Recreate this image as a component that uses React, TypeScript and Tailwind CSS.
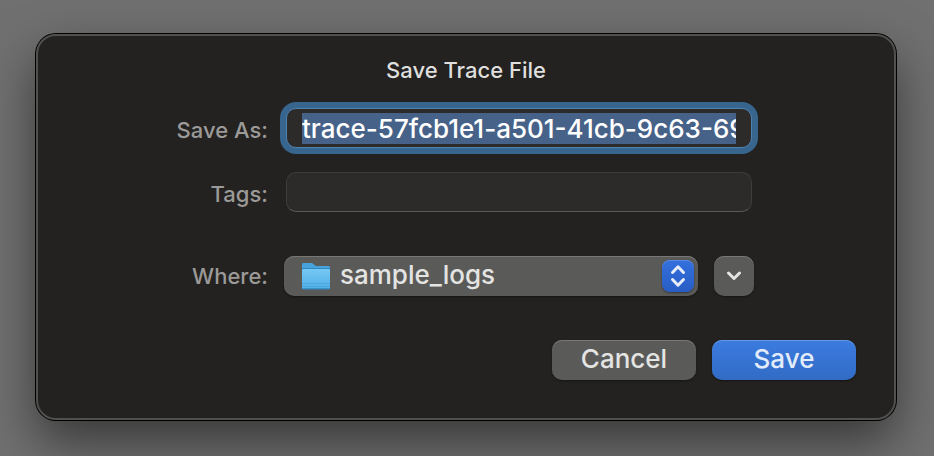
import { useEffect, useRef } from 'react';
import type { ReactNode } from 'react';
import { clsx } from 'clsx';

const FILE_NAME = 'trace-57fcb1e1-a501-41cb-9c63-69';
const FOLDERS = ['sample_logs'];

interface FieldRowProps {
  id: string;
  label: string;
  className?: string;
  labelClassName?: string;
  children: ReactNode;
}

/** Right-aligned label with its control next to it. */
function FieldRow({ id, label, className, labelClassName, children }: FieldRowProps) {
  return (
    <div className={clsx('grid grid-cols-[230px_minmax(0,1fr)] items-center gap-x-4', className)}>
      <label htmlFor={id} className={clsx('text-right text-[22px] leading-6 font-medium text-[#9b9a98]', labelClassName)}>
        {label}
      </label>
      {children}
    </div>
  );
}

function FolderIcon() {
  return (
    <svg width="30" height="28" viewBox="0 0 30 28" aria-hidden="true">
      <defs>
        <linearGradient id="folder-front" x1="0" y1="0" x2="0" y2="1">
          <stop offset="0" stopColor="#74c8f4" />
          <stop offset="1" stopColor="#52aee6" />
        </linearGradient>
      </defs>
      <path d="M1 2.500A1.500 1.500 0 0 1 2.500 1h7.700c.8 0 1.300.2 1.900.7l1.500 1.500c.5.5 1 .8 1.700.8h12.200A1.500 1.500 0 0 1 29 5.500V26a1.500 1.500 0 0 1-1.500 1.500h-25A1.500 1.500 0 0 1 1 26z" fill="#2f86c0" />
      <path d="M1 2.500A1.500 1.500 0 0 1 2.500 1h7.700c.8 0 1.300.2 1.900.7l1.500 1.500c.5.5 1 .8 1.700.8h12.200A1.500 1.500 0 0 1 29 5.500V6H1z" fill="#48a3dc" />
      <path d="M1 8A1 1 0 0 1 2 7h26a1 1 0 0 1 1 1V25.500a1.500 1.500 0 0 1-1.500 1.500h-25A1.500 1.500 0 0 1 1 25.500z" fill="url(#folder-front)" />
      <path d="M1 21.500h28M1 24.500h28" stroke="#419fd9" strokeWidth="0.600" />
      <path d="M1.500 26.600h27" stroke="#3186bf" strokeWidth="0.800" />
    </svg>
  );
}

function PopupArrows() {
  return (
    <svg width="32" height="32" viewBox="0 0 32 32" fill="none" stroke="#e6ecf8" strokeWidth="3" strokeLinecap="round" strokeLinejoin="round" aria-hidden="true">
      <path d="M10.500 12.500 16 6.800l5.500 5.700M10.500 19.500 16 25.200l5.500-5.700" />
    </svg>
  );
}

export default function App() {
  const nameRef = useRef<HTMLInputElement>(null);

  // Preselect the whole name, but keep its start in view
  useEffect(() => {
    const input = nameRef.current;
    if (!input) return;
    input.focus();
    input.setSelectionRange(0, input.value.length, 'backward');
    input.scrollLeft = 0;
  }, []);

  return (
    <main className="min-h-screen overflow-hidden bg-[#707070] pt-[34px] pr-[38px] pb-9 pl-9 font-['Inter','Liberation_Sans',sans-serif]">
      <form
        role="dialog"
        aria-labelledby="dialog-title"
        onSubmit={(e) => e.preventDefault()}
        className="rounded-[20px] border-2 border-[#50504f] bg-[#232220] pt-[22px] pb-[38px] shadow-[0_0_0_1px_#000,0_22px_50px_rgba(0,0,0,0.5)]"
      >
        <h1 id="dialog-title" className="text-center text-[22px] leading-6 font-medium text-[#dfdfde]">
          Save Trace File
        </h1>

        <div className="mt-[26px] flex flex-col gap-6 pr-[140px]">
          <FieldRow id="file-name" label="Save As:" labelClassName="pt-1">
            <input
              ref={nameRef}
              id="file-name"
              type="text"
              defaultValue={FILE_NAME}
              className="mx-0.5 h-10 min-w-0 rounded-[10px] border border-[#4f83ae] bg-[#2c2b2a] px-[15px] text-[26px] font-medium text-white ring-6 ring-[#38658e] outline-none selection:bg-[#476288] selection:text-white"
            />
          </FieldRow>

          <FieldRow id="tags" label="Tags:" labelClassName="pt-1">
            <input
              id="tags"
              type="text"
              className="mx-0.5 h-10 min-w-0 rounded-[10px] border border-[#3d3c3b] border-b-[#5a5958] bg-[#2c2b2a] px-[15px] text-[26px] text-white outline-none"
            />
          </FieldRow>

          <FieldRow id="folder" label="Where:" className="mt-5">
            <div className="flex gap-4">
              <div className="relative min-w-0 flex-1">
                <select
                  id="folder"
                  className="h-10 w-full appearance-none rounded-[10px] bg-[#5a5a58] pr-12 pb-0.5 pl-14 text-[26px] leading-9 font-medium text-[#e4e4e3] shadow-[inset_0_1px_0_#777776,0_1px_2px_rgba(0,0,0,0.4)] outline-none"
                >
                  {FOLDERS.map((name) => (
                    <option key={name}>{name}</option>
                  ))}
                </select>
                <span className="pointer-events-none absolute top-1.5 left-[17px]">
                  <FolderIcon />
                </span>
                <span className="pointer-events-none absolute top-1 right-1 rounded-lg bg-linear-to-b from-[#3470dd] to-[#285dc4] shadow-[inset_0_1px_0_#5688e4,0_1px_2px_rgba(0,0,0,0.4)]">
                  <PopupArrows />
                </span>
              </div>
              <button
                type="button"
                aria-label="Show more options"
                className="flex size-10 items-center justify-center rounded-[10px] bg-[#5a5a58] shadow-[inset_0_1px_0_#777776,0_1px_2px_rgba(0,0,0,0.4)]"
              >
                <svg width="16" height="10" viewBox="0 0 16 10" fill="none" stroke="#e4e4e3" strokeWidth="3" strokeLinecap="round" strokeLinejoin="round" aria-hidden="true">
                  <path d="M2.500 2 8 7.500 13.500 2" />
                </svg>
              </button>
            </div>
          </FieldRow>
        </div>

        <div className="mt-11 flex justify-end gap-4 pr-[38px]">
          <button
            type="button"
            className="h-10 w-36 rounded-[10px] bg-[#5a5a58] pb-0.5 text-[26px] leading-9 font-medium text-[#e4e4e3] shadow-[inset_0_1px_0_#777776,0_1px_2px_rgba(0,0,0,0.4)]"
          >
            Cancel
          </button>
          <button
            type="submit"
            className="h-10 w-36 rounded-[10px] bg-linear-to-b from-[#3b7ce0] to-[#316bc5] pb-0.5 text-[26px] leading-9 font-medium text-[#e3ecfa] shadow-[inset_0_1px_0_#6499e8,0_1px_2px_rgba(0,0,0,0.4)]"
          >
            Save
          </button>
        </div>
      </form>
    </main>
  );
}
